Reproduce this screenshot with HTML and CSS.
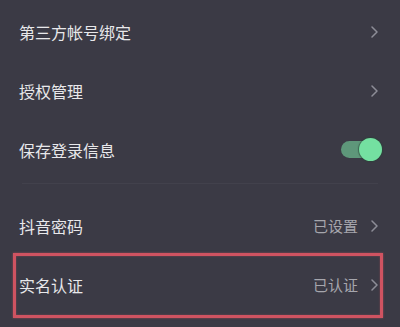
FILE: index.html
```html
<!DOCTYPE html>
<html lang="zh-CN">
<head>
<meta charset="utf-8">
<link rel="stylesheet" href="styles.css">
</head>
<body>
<div class="list">
  <div class="row">
    <span class="label">第三方帐号绑定</span>
    <span class="right"><svg class="chev" viewBox="0 0 7 12" width="7" height="12"><polyline points="1,1 6,6 1,11" /></svg></span>
  </div>
  <div class="row">
    <span class="label">授权管理</span>
    <span class="right"><svg class="chev" viewBox="0 0 7 12" width="7" height="12"><polyline points="1,1 6,6 1,11" /></svg></span>
  </div>
  <div class="row">
    <span class="label">保存登录信息</span>
    <span class="toggle"><span class="knob"></span></span>
  </div>
  <div class="divider"></div>
  <div class="row">
    <span class="label">抖音密码</span>
    <span class="right"><span class="value">已设置</span><svg class="chev" viewBox="0 0 7 12" width="7" height="12"><polyline points="1,1 6,6 1,11" /></svg></span>
  </div>
  <div class="row highlight">
    <span class="label">实名认证</span>
    <span class="right"><span class="value">已认证</span><svg class="chev" viewBox="0 0 7 12" width="7" height="12"><polyline points="1,1 6,6 1,11" /></svg></span>
  </div>
</div>
</body>
</html>
```
FILE: styles.css
```css
html, body {
  margin: 0;
  padding: 0;
  background: #3b3a45;
}
body {
  width: 400px;
  height: 327px;
  overflow: hidden;
  font-family: "Noto Sans CJK SC", "Noto Sans", sans-serif;
}
.list {
  padding-top: 2px;
}
.row {
  position: relative;
  height: 59px;
  display: flex;
  align-items: center;
  justify-content: space-between;
  padding: 0 22px 0 19px;
}
.label {
  font-size: 16px;
  color: #e8e8eb;
  line-height: 1;
}
.right {
  display: flex;
  align-items: center;
  gap: 13px;
}
.value {
  font-size: 15px;
  color: #a6a6ad;
  line-height: 1;
}
.chev {
  display: block;
  fill: none;
  stroke: #8d8d97;
  stroke-width: 1.5;
  stroke-linecap: round;
  stroke-linejoin: round;
}
.toggle {
  position: relative;
  width: 41px;
  height: 17px;
  border-radius: 9px;
  background: #5e977a;
  margin-right: -4px;
}
.knob {
  position: absolute;
  right: 0;
  top: -3px;
  width: 23px;
  height: 23px;
  border-radius: 50%;
  background: #74e0a1;
  box-shadow: 0 0 1px 1px rgba(40, 70, 55, 0.6);
}
.divider {
  height: 1px;
  margin: 4px 22px 12px 22px;
  background: #42414c;
}
.highlight::after {
  content: "";
  position: absolute;
  left: 13px;
  right: 17px;
  top: -2px;
  bottom: -4px;
  border: 3px solid #cf5361;
  box-shadow: 0 0 2px rgba(207, 83, 97, 0.6), inset 0 0 2px rgba(207, 83, 97, 0.5);
  pointer-events: none;
}
```
